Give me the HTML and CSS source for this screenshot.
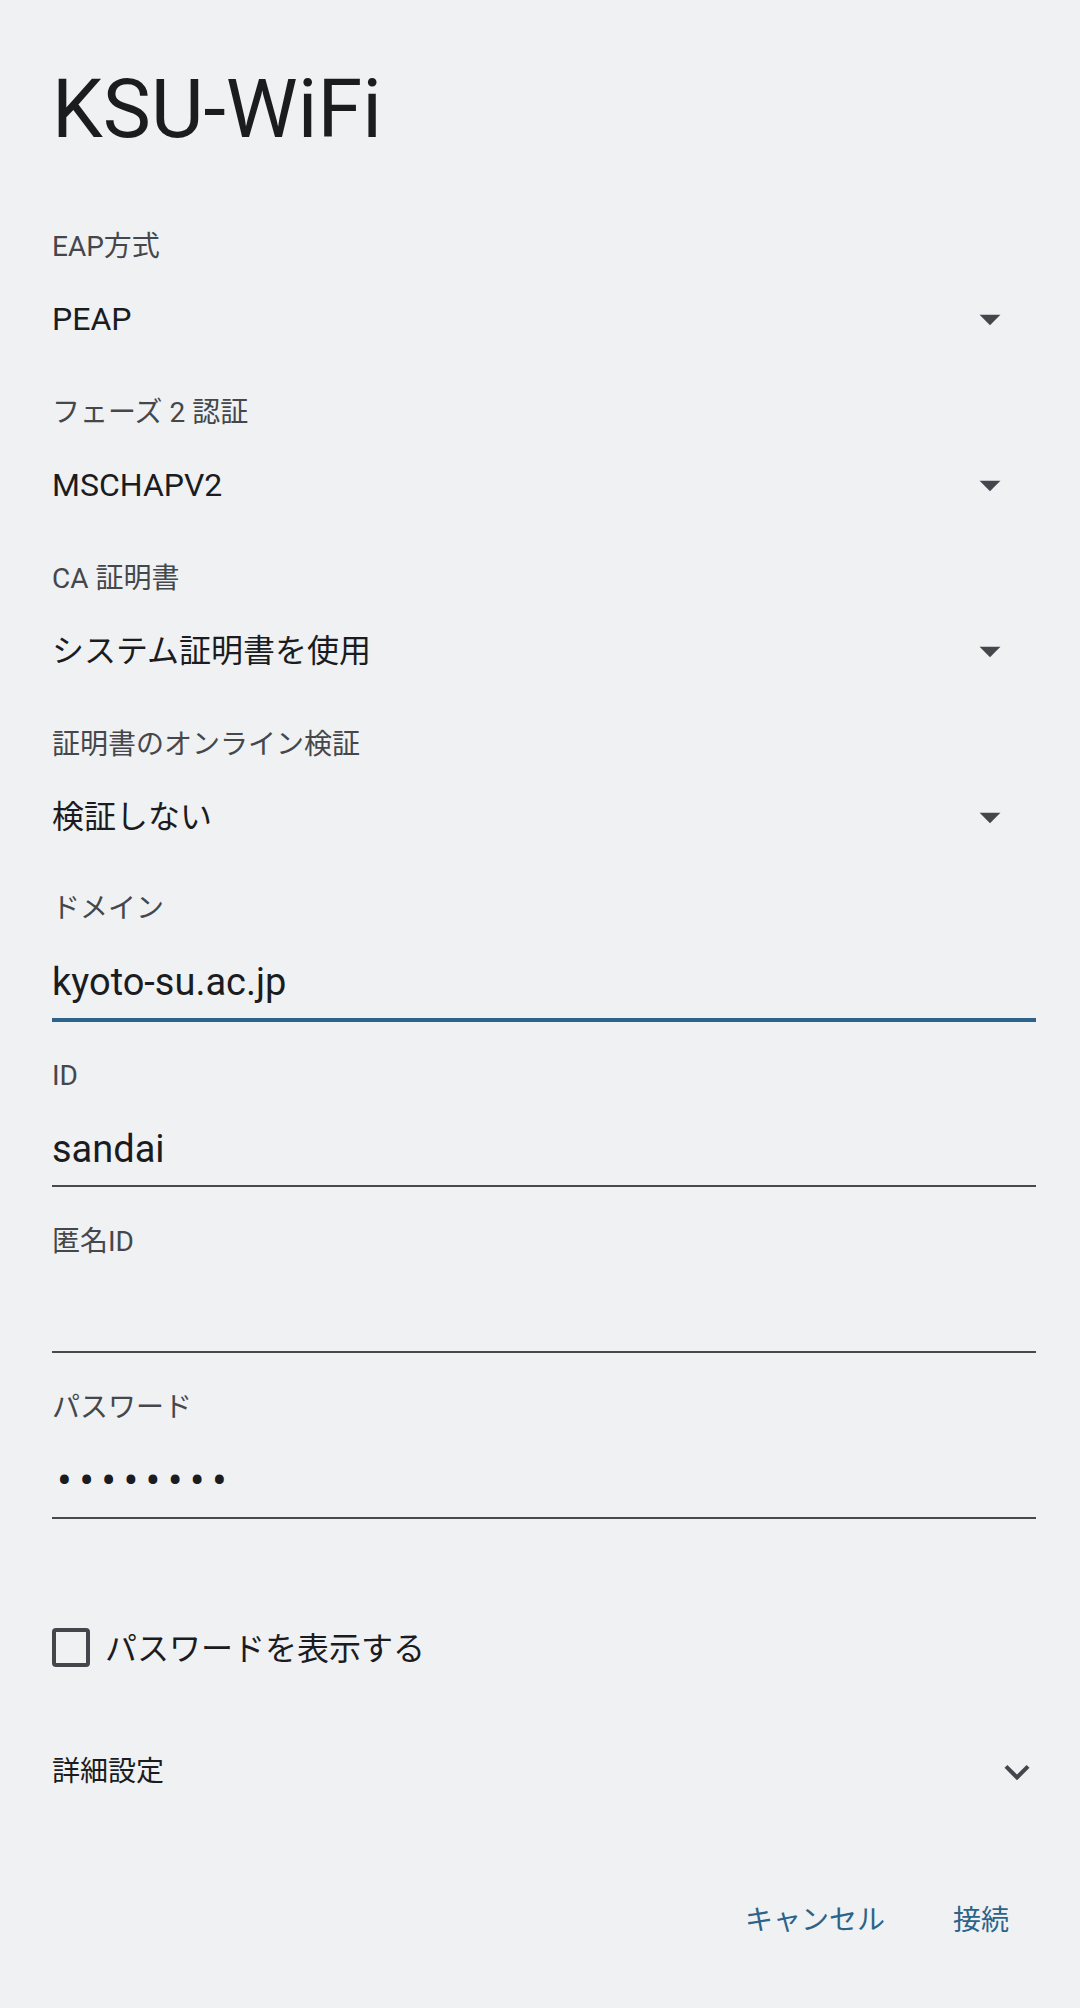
FILE: index.html
```html
<!DOCTYPE html>
<html lang="ja">
<head>
    <meta charset="UTF-8">
    <meta name="viewport" content="width=device-width, initial-scale=1.0">
    <title>KSU-WiFi</title>
    <link rel="stylesheet" href="styles.css">
</head>
<body>
    <div class="dialog">
        <h1 class="dialog-title">KSU-WiFi</h1>

        <div class="select-field">
            <div class="field-label">EAP方式</div>
            <div class="select-row">
                <span class="select-value">PEAP</span>
                <svg class="drop-arrow" viewBox="0 0 24 24"><path d="M7 10l5 5 5-5z"/></svg>
            </div>
        </div>

        <div class="select-field">
            <div class="field-label">フェーズ 2 認証</div>
            <div class="select-row">
                <span class="select-value">MSCHAPV2</span>
                <svg class="drop-arrow" viewBox="0 0 24 24"><path d="M7 10l5 5 5-5z"/></svg>
            </div>
        </div>

        <div class="select-field">
            <div class="field-label">CA 証明書</div>
            <div class="select-row">
                <span class="select-value">システム証明書を使用</span>
                <svg class="drop-arrow" viewBox="0 0 24 24"><path d="M7 10l5 5 5-5z"/></svg>
            </div>
        </div>

        <div class="select-field">
            <div class="field-label">証明書のオンライン検証</div>
            <div class="select-row">
                <span class="select-value">検証しない</span>
                <svg class="drop-arrow" viewBox="0 0 24 24"><path d="M7 10l5 5 5-5z"/></svg>
            </div>
        </div>

        <div class="text-field focused">
            <div class="field-label">ドメイン</div>
            <div class="input-value">kyoto-su.ac.jp</div>
        </div>

        <div class="text-field">
            <div class="field-label">ID</div>
            <div class="input-value">sandai</div>
        </div>

        <div class="text-field">
            <div class="field-label">匿名ID</div>
            <div class="input-value"></div>
        </div>

        <div class="text-field">
            <div class="field-label">パスワード</div>
            <div class="input-value password">••••••••</div>
        </div>

        <label class="check-row">
            <span class="checkbox"></span>
            <span class="check-text">パスワードを表示する</span>
        </label>

        <div class="advanced-row">
            <span class="advanced-text">詳細設定</span>
            <svg class="expand-icon" viewBox="0 0 24 24"><path d="M16.59 8.59L12 13.17 7.41 8.59 6 10l6 6 6-6z"/></svg>
        </div>

        <div class="dialog-actions">
            <button class="text-button">キャンセル</button>
            <button class="text-button">接続</button>
        </div>
    </div>
</body>
</html>
```

FILE: styles.css
```css
body {
    margin: 0;
    padding: 0;
    background: #f0f1f3;
    color: #1b1c1f;
    font-family: Roboto, "Noto Sans CJK JP", sans-serif;
}

.dialog {
    padding: 60px 44px 0 52px;
}

.dialog-title {
    margin: 0;
    font-size: 81px;
    line-height: 100px;
    font-weight: 400;
    color: #1b1c1e;
}

.field-label {
    font-size: 28px;
    line-height: 40px;
    color: #44474c;
}

/* выпадающие списки */
.select-field {
    height: 166px;
}

.select-field:first-of-type {
    margin-top: 67px;
}

.select-row {
    margin-top: 30px;
    display: flex;
    align-items: center;
    justify-content: space-between;
    height: 44px;
}

.select-value {
    font-size: 32px;
    line-height: 44px;
}

.drop-arrow {
    width: 50px;
    height: 50px;
    fill: #43474c;
    margin-right: 21px;
}

/* текстовые поля */
.text-field {
    padding-bottom: 11px;
    border-bottom: 2px solid #46494e;
    margin-bottom: 35px;
}

.text-field.focused {
    border-bottom: 4px solid #2c6389;
    margin-bottom: 34px;
    margin-top: -2px;
}

.input-value {
    margin-top: 28px;
    font-size: 38px;
    line-height: 50px;
    height: 50px;
}

.input-value.password {
    font-size: 44px;
    letter-spacing: 7.3px;
    padding-left: 5px;
}

/* чекбокс */
.check-row {
    display: flex;
    align-items: center;
    height: 60px;
    margin-top: 98px;
}

.checkbox {
    box-sizing: border-box;
    width: 38px;
    height: 39px;
    border: 4px solid #43474c;
    border-radius: 4px;
    margin-right: 15px;
}

.check-text {
    font-size: 32px;
    line-height: 44px;
    margin-top: 4px;
}

.advanced-row {
    display: flex;
    align-items: center;
    justify-content: space-between;
    height: 40px;
    margin-top: 75px;
}

.advanced-text {
    font-size: 28px;
    line-height: 40px;
}

.expand-icon {
    width: 50px;
    height: 50px;
    fill: #43474c;
    margin-right: -6px;
}

.dialog-actions {
    display: flex;
    justify-content: flex-end;
    gap: 15px;
    margin-top: 109px;
}

.text-button {
    background: none;
    border: none;
    padding: 0 26px;
    margin-right: 1px;
    font-family: Roboto, "Noto Sans CJK JP", sans-serif;
    font-size: 28px;
    line-height: 40px;
    color: #2c6389;
}
```
